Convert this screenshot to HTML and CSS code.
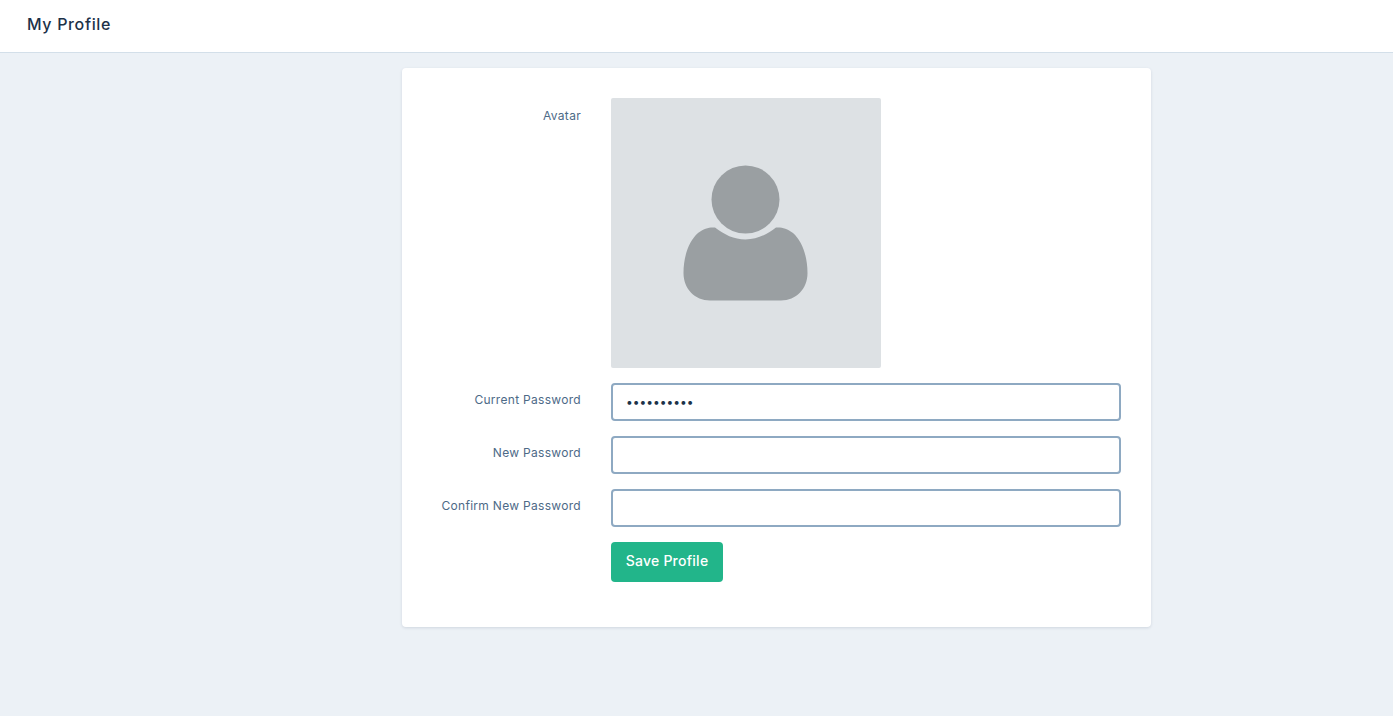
FILE: index.html
```html
<!DOCTYPE html>
<html lang="en">
<head>
<meta charset="utf-8">
<title>My Profile</title>
<link rel="stylesheet" href="styles.css">
</head>
<body>
<header class="topbar"><h1 class="title">My Profile</h1></header>
<main class="main">
  <form class="card">
    <div class="row">
      <label class="label label-avatar">Avatar</label>
      <div class="avatar">
        <svg class="avatar-icon" viewBox="0 0 270 270" width="270" height="270">
          <circle cx="134.5" cy="101.5" r="34"/>
          <path d="M104 129.500C113 136.500 123 141.500 134.500 141.500C146 141.500 156 136.500 165 129.500C170 129 176 130 182 135C191 143 196.500 158 196.500 175C196.500 191 185 202.500 170 202.500H99C84 202.500 72.500 191 72.500 175C72.500 158 78 143 87 135C93 130 99 129 104 129.500Z"/>
        </svg>
      </div>
    </div>
    <div class="row">
      <label class="label" for="cur">Current Password</label>
      <input class="input" id="cur" type="password" value="••••••••••">
    </div>
    <div class="row">
      <label class="label" for="new">New Password</label>
      <input class="input" id="new" type="password">
    </div>
    <div class="row">
      <label class="label" for="conf">Confirm New Password</label>
      <input class="input" id="conf" type="password">
    </div>
    <div class="row">
      <span class="label"></span>
      <button class="save" type="button">Save Profile</button>
    </div>
  </form>
</main>
</body>
</html>
```
FILE: styles.css
```css
* { box-sizing: border-box; }
html, body { height: 100%; }
body {
  margin: 0;
  background: #ecf1f6;
  font-family: "Inter", "Open Sans", sans-serif;
  color: #1c3249;
  overflow: hidden;
}
.topbar {
  height: 53px;
  background: #fff;
  border-bottom: 1px solid #d3dfe9;
  padding: 0 27px 4px;
  display: flex;
  align-items: center;
}
.title {
  margin: 0;
  font-size: 16px;
  font-weight: 500;
  letter-spacing: 0.65px;
  color: #1c3249;
}
.main {
  margin-left: 160px;
  padding-top: 15px;
  display: flex;
  justify-content: center;
}
.card {
  width: 749px;
  height: 559px;
  background: #fff;
  border-radius: 4px;
  box-shadow: 0 1px 3px rgba(40, 60, 90, 0.14);
  padding: 30px;
  display: flex;
  flex-direction: column;
  gap: 15px;
}
.row {
  display: flex;
  gap: 30px;
  align-items: flex-start;
}
.label {
  width: 149px;
  flex: none;
  text-align: right;
  font-size: 12px;
  line-height: 16px;
  padding-top: 9px;
  color: #4d6a87;
  letter-spacing: 0.3px;
  white-space: nowrap;
}
.label-avatar { padding-top: 10px; }
.avatar {
  width: 270px;
  height: 270px;
  background: #dde1e4;
  border-radius: 2px;
}
.avatar-icon { display: block; fill: #9a9fa2; }
.input {
  width: 510px;
  height: 38px;
  border: 2px solid #8ea9c2;
  border-radius: 4px;
  background: #fff;
  padding: 0 13px 2px;
  font-family: "Inter", sans-serif;
  font-size: 12px;
  color: #1c3249;
  outline: none;
}
.save {
  width: 112px;
  height: 40px;
  border: 0;
  border-radius: 4px;
  background: #22b58a;
  color: #fff;
  padding: 0 0 3px;
  font-family: "Inter", sans-serif;
  font-size: 14px;
  font-weight: 500;
  letter-spacing: 0.25px;
}
```
